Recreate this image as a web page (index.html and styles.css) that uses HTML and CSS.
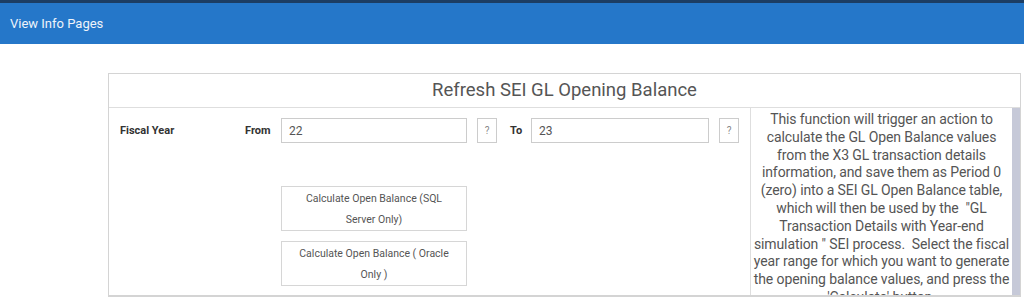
FILE: index.html
```html
<!DOCTYPE html>
<html lang="en">
<head>
<meta charset="UTF-8" />
<title>Refresh SEI GL Opening Balance</title>
<link rel="stylesheet" href="styles.css">
</head>
<body>

<div class="topbar">
  <div class="topbar-strip"></div>
  <div class="topbar-main">View Info Pages</div>
</div>

<div class="panel">
  <div class="panel-title">Refresh SEI GL Opening Balance</div>
  <div class="panel-body">
    <div class="form-area">
      <div class="form-row">
        <div class="lbl-main">Fiscal Year</div>
        <div class="lbl-from">From</div>
        <input class="year-input" type="text" value="22">
        <button class="help-btn">?</button>
        <div class="lbl-to">To</div>
        <input class="year-input to-input" type="text" value="23">
        <button class="help-btn">?</button>
      </div>
      <div class="actions">
        <button class="calc-btn">Calculate Open Balance (SQL Server Only)</button>
        <button class="calc-btn">Calculate Open Balance ( Oracle Only )</button>
      </div>
    </div>
    <div class="desc">
      <div class="desc-text">This function will trigger an action to calculate the GL Open Balance values from the X3 GL transaction details information, and save them as Period 0 (zero) into a SEI GL Open Balance table, which will then be used by the &nbsp;"GL Transaction Details with Year-end simulation " SEI process. &nbsp;Select the fiscal year range for which you want to generate the opening balance values, and press the 'Calculate' button.</div>
      <div class="scrollbar"></div>
    </div>
  </div>
</div>

</body>
</html>
```

FILE: styles.css
```css
body {
  margin: 0;
  padding: 0;
  font-family: Roboto, "Liberation Sans", sans-serif;
  background: #fff;
  color: #555;
  overflow: hidden;
}
.topbar-strip {
  height: 3px;
  background: #1c3d63;
}
.topbar-main {
  height: 41px;
  background: #2577c9;
  color: #eef3fa;
  font-size: 13px;
  line-height: 41px;
  padding-left: 10px;
}
.panel {
  margin: 29px 0 0 108px;
  width: 911px;
  border: 1px solid #d4d4d4;
  border-bottom-width: 2px;
}
.panel-title {
  height: 33px;
  line-height: 33px;
  text-align: center;
  font-size: 18.5px;
  color: #555;
  border-bottom: 1px solid #dedede;
}
.panel-body {
  display: flex;
  height: 187px;
}
.form-area {
  width: 641px;
  padding-top: 10px;
}
.form-row {
  display: flex;
  align-items: center;
  height: 25px;
}
.lbl-main {
  width: 136px;
  padding-left: 11px;
  box-sizing: border-box;
  font-size: 11px;
  font-weight: bold;
  color: #333;
}
.lbl-from {
  width: 36px;
  font-size: 11px;
  font-weight: bold;
  color: #333;
}
.lbl-to {
  width: 21px;
  margin-left: 13px;
  font-size: 11px;
  font-weight: bold;
  color: #333;
}
.year-input {
  width: 186px;
  height: 25px;
  box-sizing: border-box;
  border: 1px solid #ccc;
  padding: 0 7px;
  font-family: inherit;
  font-size: 12px;
  color: #555;
  outline: none;
}
.to-input {
  width: 178px;
}
.help-btn {
  width: 20px;
  height: 25px;
  margin-left: 10px;
  padding: 0;
  border: 1px solid #ccc;
  background: #fff;
  color: #888;
  font-family: inherit;
  font-size: 10px;
}
.actions {
  display: flex;
  flex-direction: column;
  gap: 10px;
  margin: 43px 0 0 172px;
}
.calc-btn {
  width: 186px;
  height: 45px;
  padding: 0 16px;
  border: 1px solid #d6d6d6;
  background: #fff;
  color: #555;
  font-family: inherit;
  font-size: 10.5px;
  line-height: 21px;
}
.desc {
  display: flex;
  flex: 1;
  border-left: 1px solid #dedede;
  overflow: hidden;
}
.desc-text {
  flex: 1;
  padding: 3px 0 0 0;
  text-align: center;
  font-size: 14px;
  line-height: 17.8px;
  letter-spacing: -0.1px;
  color: #555;
}
.scrollbar {
  width: 8px;
  background: #c6c9d8;
}
```
